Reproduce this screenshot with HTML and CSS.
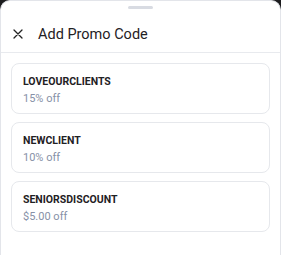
FILE: index.html
```html
<!DOCTYPE html>
<html>
<head>
<meta charset="utf-8">
<link rel="stylesheet" href="styles.css">
</head>
<body>
<div class="sheet">
  <div class="handle"></div>
  <div class="header">
    <svg class="close" width="10" height="10" viewBox="0 0 10 10"><path d="M1 1L9 9M9 1L1 9" stroke="#222" stroke-width="1.3" stroke-linecap="round"/></svg>
    <span class="title">Add Promo Code</span>
  </div>
  <div class="list">
    <div class="card">
      <div class="code">LOVEOURCLIENTS</div>
      <div class="amount">15% off</div>
    </div>
    <div class="card">
      <div class="code">NEWCLIENT</div>
      <div class="amount">10% off</div>
    </div>
    <div class="card">
      <div class="code">SENIORSDISCOUNT</div>
      <div class="amount">$5.00 off</div>
    </div>
  </div>
</div>
</body>
</html>
```
FILE: styles.css
```css
html, body {
  margin: 0;
  padding: 0;
  background: #1c1c1e;
  height: 100%;
}
body {
  font-family: Roboto, Inter, sans-serif;
  overflow: hidden;
}
.sheet {
  background: #fff;
  border: 1px solid #e3e5ea;
  border-bottom: none;
  border-radius: 10px 10px 0 0;
  height: 255px;
  box-sizing: border-box;
}
.handle {
  width: 25px;
  height: 3px;
  border-radius: 2px;
  background: #d8dbe2;
  margin: 5px auto 0;
}
.header {
  display: flex;
  align-items: center;
  height: 36px;
  margin-top: 7px;
  padding-left: 12px;
  border-bottom: 1px solid #e8eaee;
}
.close {
  display: block;
  margin-right: 15px;
}
.title {
  font-size: 14.5px;
  color: #1f2124;
}
.list {
  display: flex;
  flex-direction: column;
  gap: 8px;
  padding: 10px 10px 0;
}
.card {
  border: 1px solid #e6e8ec;
  border-radius: 8px;
  height: 51px;
  box-sizing: border-box;
  padding: 11px 11px 0;
}
.code {
  font-size: 10.5px;
  font-weight: 700;
  color: #1f2124;
  line-height: 14px;
}
.amount {
  font-size: 11px;
  color: #8791a7;
  line-height: 14px;
  margin-top: 3px;
}
```
